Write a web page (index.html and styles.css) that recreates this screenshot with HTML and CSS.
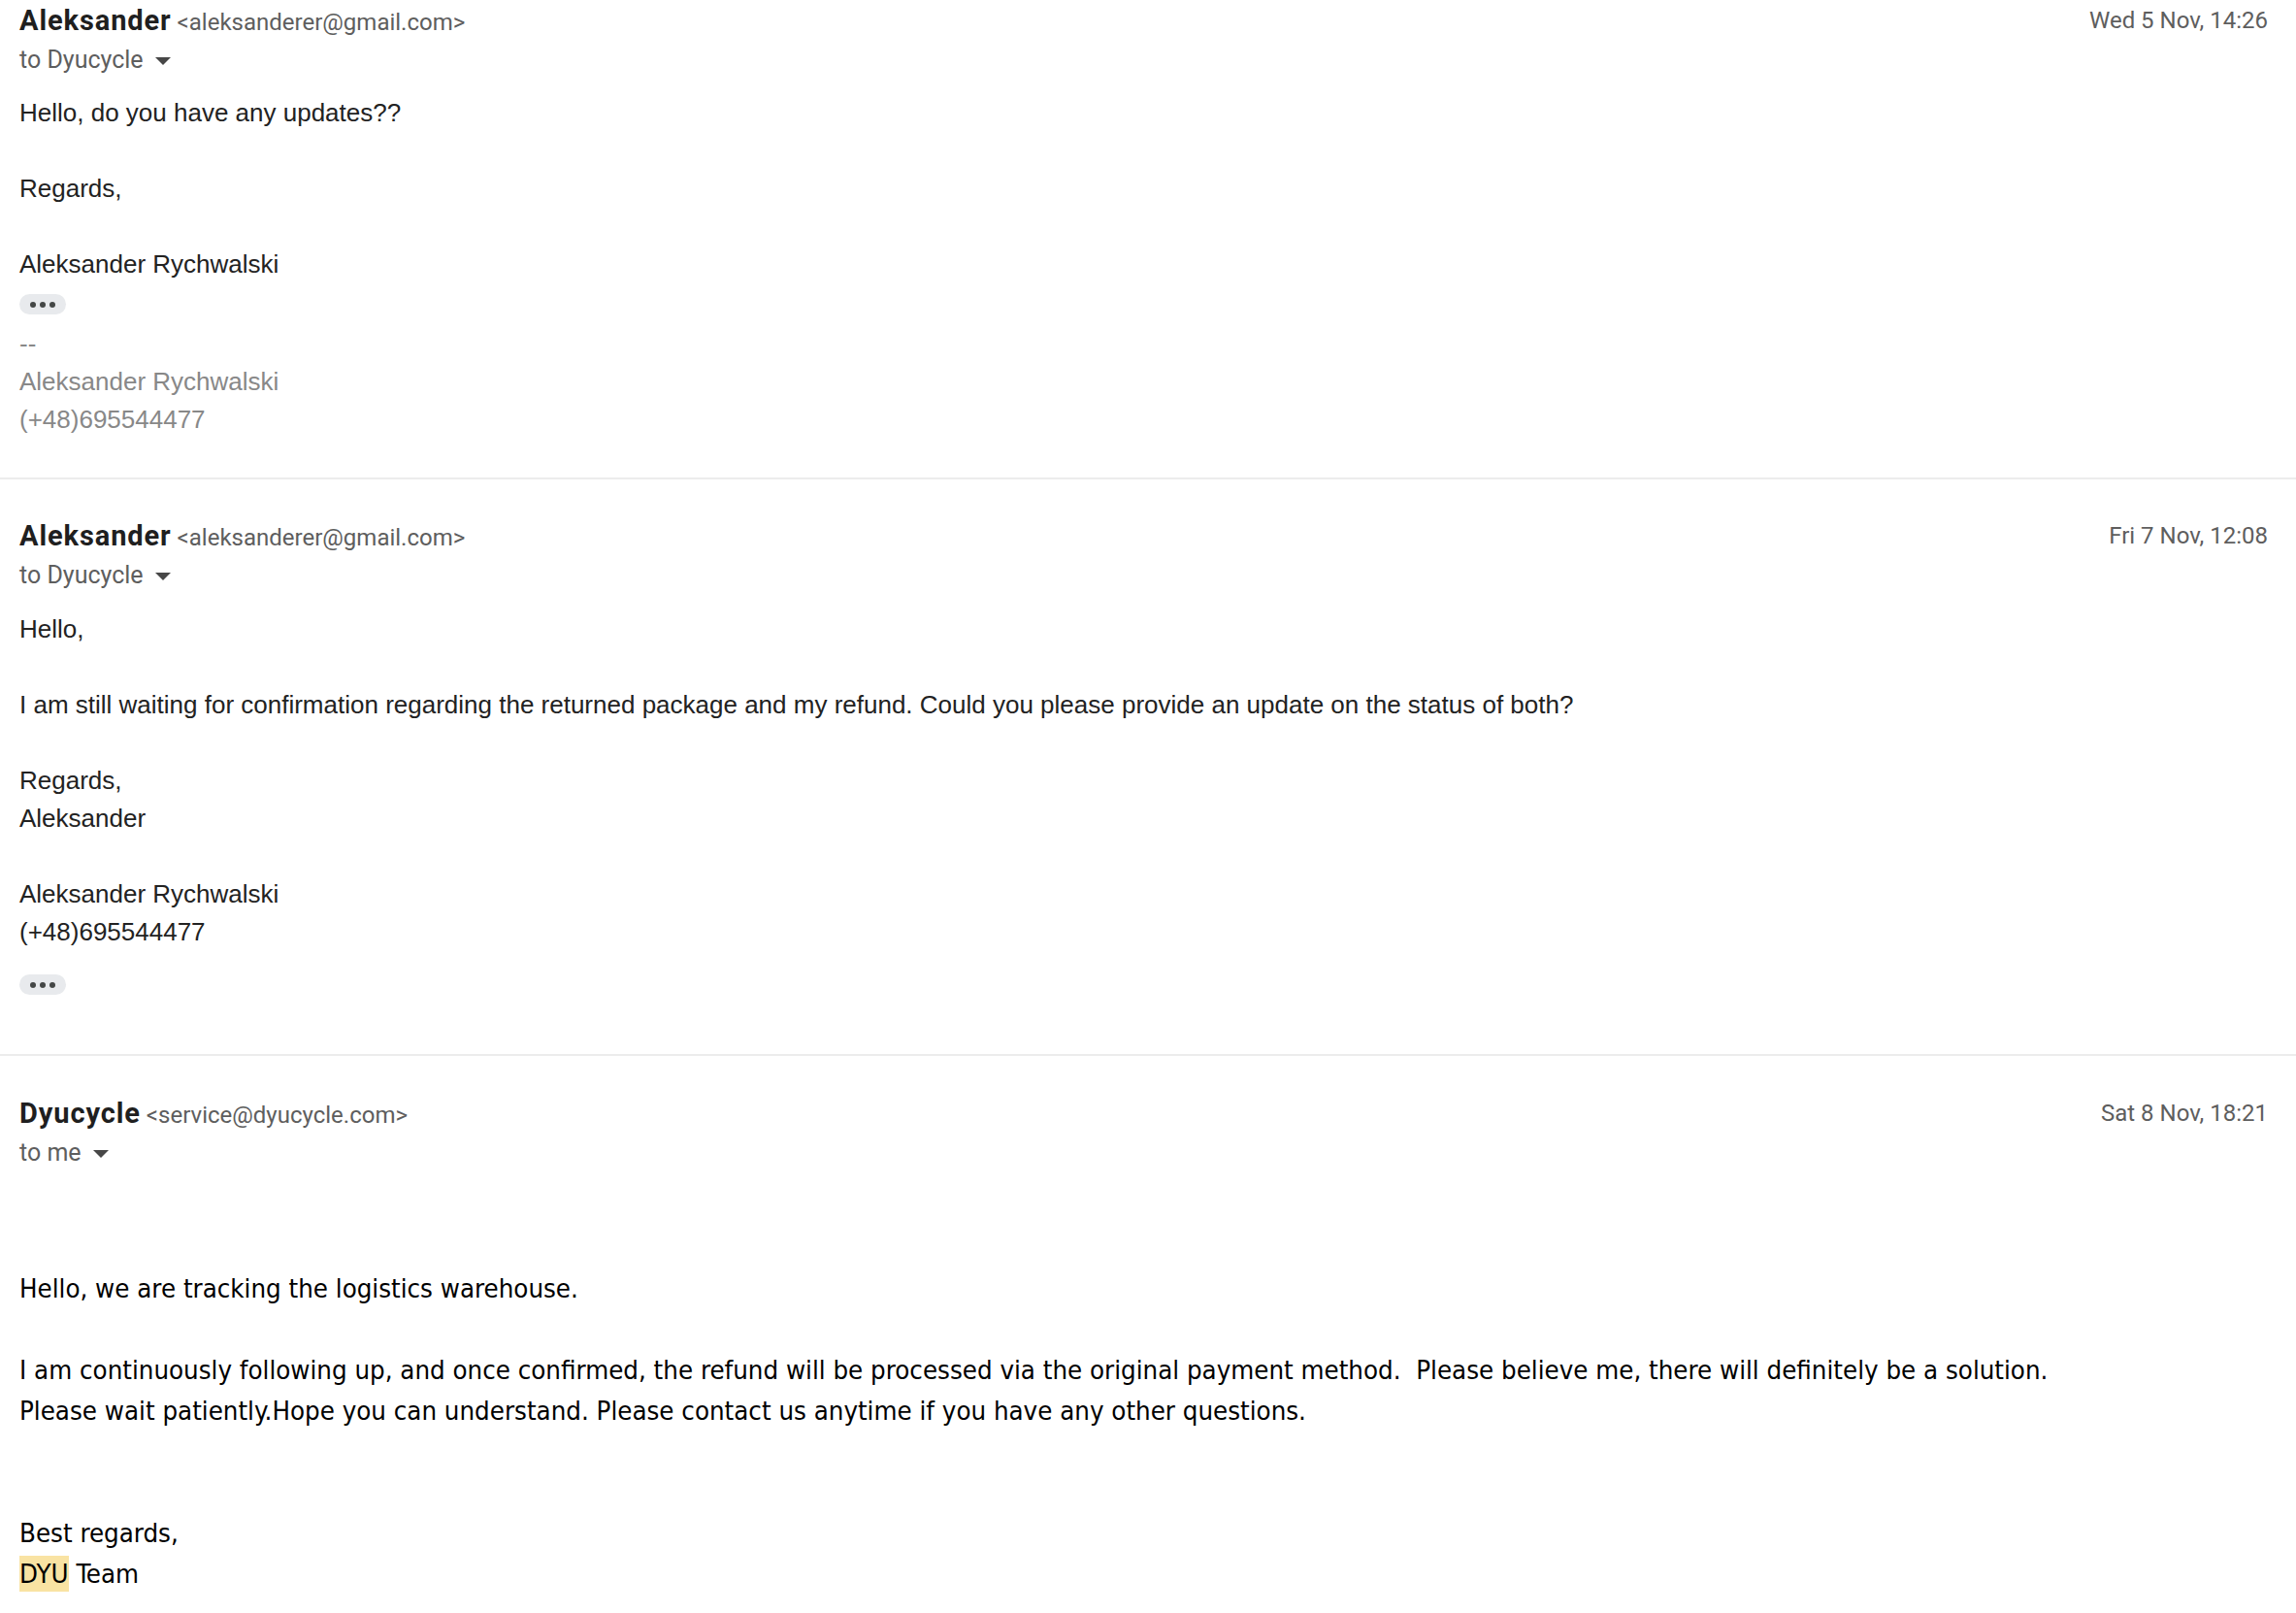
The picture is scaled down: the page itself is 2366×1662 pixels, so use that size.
FILE: index.html
```html
<!DOCTYPE html>
<html lang="en">
<head>
<meta charset="utf-8">
<title>Thread</title>
<link rel="stylesheet" href="styles.css">
</head>
<body>
<main class="thread">
  <section class="msg msg-first">
    <header class="head">
      <div class="who">
        <div class="from"><span class="name">Aleksander</span><span class="addr">&lt;aleksanderer@gmail.com&gt;</span></div>
        <div class="to">to Dyucycle<span class="caret"></span></div>
      </div>
      <div class="date">Wed 5 Nov, 14:26</div>
    </header>
    <div class="body">
      <div>Hello, do you have any updates??</div>
      <div><br></div>
      <div>Regards,</div>
      <div><br></div>
      <div>Aleksander Rychwalski</div>
      <div class="more more-tight"><span class="dot"></span><span class="dot"></span><span class="dot"></span></div>
      <div class="sig">
        <div>--</div>
        <div>Aleksander Rychwalski</div>
        <div>(+48)695544477</div>
      </div>
    </div>
  </section>

  <section class="msg msg-second">
    <header class="head">
      <div class="who">
        <div class="from"><span class="name">Aleksander</span><span class="addr">&lt;aleksanderer@gmail.com&gt;</span></div>
        <div class="to">to Dyucycle<span class="caret"></span></div>
      </div>
      <div class="date">Fri 7 Nov, 12:08</div>
    </header>
    <div class="body body-2">
      <div>Hello,</div>
      <div><br></div>
      <div>I am still waiting for confirmation regarding the returned package and my refund. Could you please provide an update on the status of both?</div>
      <div><br></div>
      <div>Regards,</div>
      <div>Aleksander</div>
      <div><br></div>
      <div>Aleksander Rychwalski</div>
      <div>(+48)695544477</div>
      <div class="more more-loose"><span class="dot"></span><span class="dot"></span><span class="dot"></span></div>
    </div>
  </section>

  <section class="msg msg-third">
    <header class="head">
      <div class="who">
        <div class="from"><span class="name">Dyucycle</span><span class="addr">&lt;service@dyucycle.com&gt;</span></div>
        <div class="to">to me<span class="caret"></span></div>
      </div>
      <div class="date">Sat 8 Nov, 18:21</div>
    </header>
    <div class="body body-3">
      <div><br></div>
      <div><br></div>
      <div>Hello, we are tracking the logistics warehouse.</div>
      <div><br></div>
      <div>I am continuously following up, and once confirmed, the refund will be processed via the original payment method.&nbsp; Please believe me, there will definitely be a solution.</div>
      <div>Please wait patiently.Hope you can understand. Please contact us anytime if you have any other questions.</div>
      <div><br></div>
      <div><br></div>
      <div>Best regards,</div>
      <div><span class="hl">DYU</span> Team</div>
    </div>
  </section>
</main>
</body>
</html>
```
FILE: styles.css
```css
html, body {
  margin: 0;
  padding: 0;
  background: #ffffff;
}

body {
  width: 2366px;
  height: 1662px;
  overflow: hidden;
}

.thread {
  display: flex;
  flex-direction: column;
}

.msg {
  padding: 37px 29px 40px 20px;
  border-bottom: 2px solid #ececec;
}

.msg-first {
  padding-top: 0;
}

.msg-second {
  padding-bottom: 61px;
}

.msg-third {
  border-bottom: none;
  padding-top: 38px;
}

.head {
  display: flex;
  justify-content: space-between;
  align-items: flex-start;
  font-family: Roboto, "Liberation Sans", sans-serif;
}

.from {
  display: flex;
  align-items: baseline;
  gap: 6px;
  height: 42px;
  line-height: 42px;
  white-space: nowrap;
}

.name {
  font-size: 29px;
  font-weight: 700;
  color: #1f1f1f;
  letter-spacing: 0.9px;
}

.addr {
  font-size: 24px;
  color: #5e5e5e;
}

.to {
  display: flex;
  align-items: center;
  height: 40px;
  line-height: 40px;
  font-size: 25px;
  color: #5e5e5e;
}

.caret {
  display: inline-block;
  width: 0;
  height: 0;
  margin-left: 12px;
  margin-top: 2px;
  border-left: 8px solid transparent;
  border-right: 8px solid transparent;
  border-top: 8px solid #474747;
}

.date {
  font-size: 24px;
  line-height: 42px;
  color: #5e5e5e;
  white-space: nowrap;
}

.body {
  margin-top: 15px;
  font-family: "Liberation Sans", Arial, sans-serif;
  font-size: 26px;
  line-height: 39px;
  color: #222222;
}

.body-2 {
  margin-top: 16px;
}

.more {
  display: flex;
  align-items: center;
  justify-content: center;
  gap: 4px;
  width: 48px;
  height: 21px;
  border-radius: 11px;
  background: #e8eaed;
}

.more-tight {
  margin-top: 11px;
  margin-bottom: 11px;
}

.more-loose {
  margin-top: 24px;
}

.dot {
  width: 6px;
  height: 6px;
  border-radius: 50%;
  background: #444746;
}

.sig {
  color: #888888;
}

.body-3 {
  font-family: "DejaVu Sans Condensed", "DejaVu Sans", sans-serif;
  font-stretch: condensed;
  font-size: 27.4px;
  line-height: 42px;
  color: #000000;
}

.hl {
  background: #f9e3a3;
  padding: 3px 0;
}
```
